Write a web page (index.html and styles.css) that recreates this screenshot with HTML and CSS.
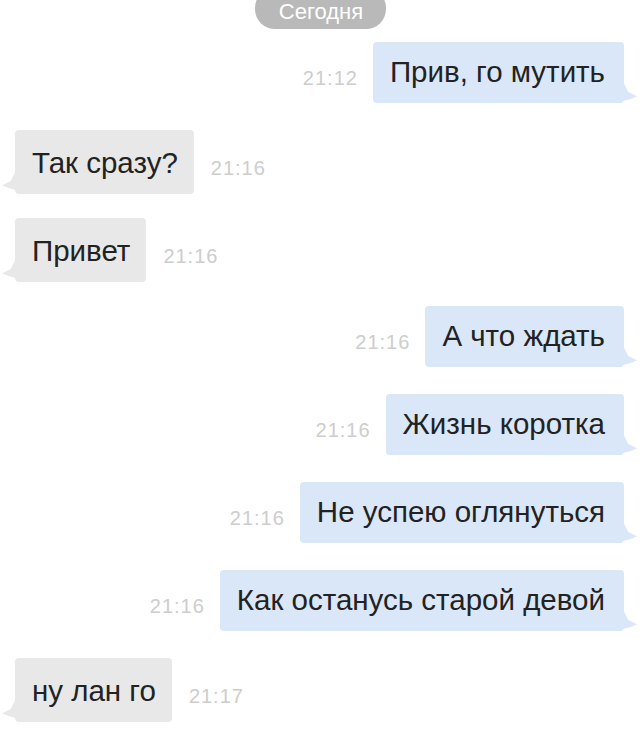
FILE: index.html
```html
<!DOCTYPE html>
<html lang="ru">
<head>
<meta charset="utf-8">
<link rel="stylesheet" href="styles.css">
</head>
<body>
<div class="chat">
  <div class="date"><span class="pill">Сегодня</span></div>
  <div class="row out"><span class="time">21:12</span><div class="bubble">Прив, го мутить</div></div>
  <div class="row in"><div class="bubble">Так сразу?</div><span class="time">21:16</span></div>
  <div class="row in"><div class="bubble">Привет</div><span class="time">21:16</span></div>
  <div class="row out"><span class="time">21:16</span><div class="bubble">А что ждать</div></div>
  <div class="row out"><span class="time">21:16</span><div class="bubble">Жизнь коротка</div></div>
  <div class="row out"><span class="time">21:16</span><div class="bubble">Не успею оглянуться</div></div>
  <div class="row out"><span class="time">21:16</span><div class="bubble">Как останусь старой девой</div></div>
  <div class="row in"><div class="bubble">ну лан го</div><span class="time">21:17</span></div>
</div>
</body>
</html>
```
FILE: styles.css
```css
html, body {
  margin: 0;
  padding: 0;
  background: #ffffff;
}
body {
  width: 640px;
  height: 753px;
  overflow: hidden;
  font-family: "Liberation Sans", Arial, sans-serif;
  color: #222222;
}
.chat {
  display: flex;
  flex-direction: column;
}
.date {
  display: flex;
  justify-content: center;
  height: 42px;
}
.pill {
  display: block;
  width: 131px;
  height: 41px;
  margin-top: -12px;
  border-radius: 20px;
  background: #b9b9b9;
  color: #ffffff;
  font-size: 22px;
  line-height: 47px;
  text-align: center;
  box-sizing: border-box;
  padding-left: 2px;
}
.row {
  display: flex;
  align-items: flex-start;
  height: 88px;
}
.row.out {
  justify-content: flex-end;
  padding-right: 16px;
}
.row.in {
  justify-content: flex-start;
  padding-left: 15px;
}
.bubble {
  position: relative;
  font-size: 29.5px;
  line-height: 34px;
  border-radius: 4px;
  white-space: nowrap;
}
.out .bubble {
  background: #dae7f8;
  padding: 13px 19px 14px 17px;
}
.in .bubble {
  background: #e8e8e8;
  padding: 16px 16px 14px 17px;
}
.bubble::after {
  content: "";
  position: absolute;
  width: 14px;
  height: 22px;
  bottom: 2px;
}
.out .bubble::after {
  right: -13px;
  background: #dae7f8;
  clip-path: polygon(0 0, 10% 25%, 40% 60%, 100% 78%, 50% 92%, 0 100%);
}
.in .bubble::after {
  left: -13px;
  bottom: 4px;
  background: #e8e8e8;
  clip-path: polygon(100% 0, 90% 25%, 60% 60%, 0 78%, 50% 92%, 100% 100%);
}
.time {
  font-size: 20px;
  color: #cdcdcd;
  letter-spacing: 1px;
  line-height: 24px;
}
.out .time {
  margin-right: 15px;
  margin-top: 24px;
}
.in .time {
  margin-left: 17px;
  margin-top: 26px;
}
```
